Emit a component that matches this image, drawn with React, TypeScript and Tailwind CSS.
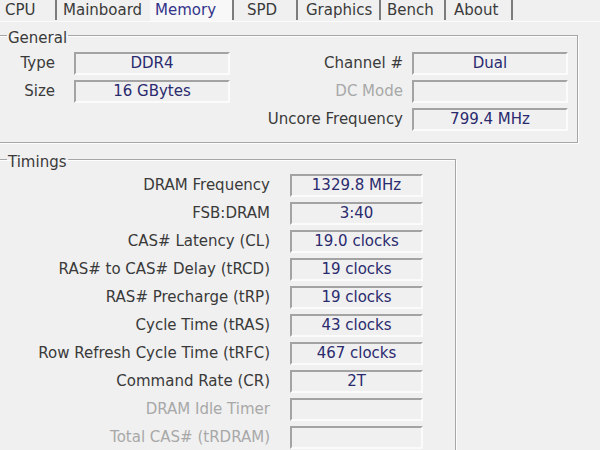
import React from "react";

const font = { fontFamily: '"DejaVu Sans", Verdana, sans-serif' };

function Field({ value, w }: { value?: string; w: string }) {
  return (
    <div
      className={`${w} h-[23px] border-2 border-t-[#a3a3a3] border-l-[#a3a3a3] border-b-[#fbfbfb] border-r-[#fbfbfb] bg-[#f0f0f0] flex items-center justify-center text-[15px] leading-[18px] text-[#2a2a6e]`}
    >
      {value}
    </div>
  );
}

function Sep() {
  return <div className="w-[2px] h-[20px] bg-[#7c7c7c] self-start" />;
}

const timings: { label: string; value?: string; disabled?: boolean }[] = [
  { label: "DRAM Frequency", value: "1329.8 MHz" },
  { label: "FSB:DRAM", value: "3:40" },
  { label: "CAS# Latency (CL)", value: "19.0 clocks" },
  { label: "RAS# to CAS# Delay (tRCD)", value: "19 clocks" },
  { label: "RAS# Precharge (tRP)", value: "19 clocks" },
  { label: "Cycle Time (tRAS)", value: "43 clocks" },
  { label: "Row Refresh Cycle Time (tRFC)", value: "467 clocks" },
  { label: "Command Rate (CR)", value: "2T" },
  { label: "DRAM Idle Timer", disabled: true },
  { label: "Total CAS# (tRDRAM)", disabled: true },
];

export default function App() {
  return (
    <div
      className="w-[600px] h-[450px] bg-[#f0f0f0] overflow-hidden text-[15px] text-[#3a3a3a]"
      style={font}
    >
      {/* Tabs */}
      <div className="flex h-[22px] border-b border-b-[#fbfbfb] leading-[20px]">
        <div className="w-[55px] pl-[5px]">CPU</div>
        <Sep />
        <div className="w-[93px] pl-[6px]">Mainboard</div>
        <div className="w-[82px] pl-[5px] bg-[#f8f8f8] text-[#33338a]">Memory</div>
        <Sep />
        <div className="w-[62px] pl-[13px]">SPD</div>
        <Sep />
        <div className="w-[81px] pl-[8px]">Graphics</div>
        <Sep />
        <div className="w-[63px] pl-[6px]">Bench</div>
        <Sep />
        <div className="w-[65px] pl-[8px]">About</div>
        <Sep />
      </div>

      {/* General */}
      <fieldset className="mt-[4px] -ml-[3px] w-[581px] border border-[#a6a6a6] shadow-[1px_1px_0_#fdfdfd,inset_1px_1px_0_#fdfdfd] pt-[5px] pb-[9px]">
        <legend className="ml-[9px] px-[1px] leading-[18px]">
          <span className="relative top-[3px]">General</span>
        </legend>
        <div className="flex flex-col">
          <div className="flex items-center h-[28px]">
            <div className="w-[57px] text-right">Type</div>
            <div className="ml-[19px]"><Field w="w-[156px]" value="DDR4" /></div>
            <div className="w-[150px] ml-[23px] text-right">Channel #</div>
            <div className="ml-[9px]"><Field w="w-[156px]" value="Dual" /></div>
          </div>
          <div className="flex items-center h-[28px]">
            <div className="w-[57px] text-right">Size</div>
            <div className="ml-[19px]"><Field w="w-[156px]" value="16 GBytes" /></div>
            <div className="w-[150px] ml-[23px] text-right text-[#a8a8a8]">DC Mode</div>
            <div className="ml-[9px]"><Field w="w-[156px]" /></div>
          </div>
          <div className="flex items-center h-[28px]">
            <div className="w-[57px]" />
            <div className="ml-[19px] w-[156px]" />
            <div className="w-[150px] ml-[23px] text-right">Uncore Frequency</div>
            <div className="ml-[9px]"><Field w="w-[156px]" value="799.4 MHz" /></div>
          </div>
        </div>
      </fieldset>

      {/* Timings */}
      <fieldset className="mt-[7px] -ml-[3px] w-[459px] border border-[#a6a6a6] shadow-[1px_1px_0_#fdfdfd,inset_1px_1px_0_#fdfdfd] pt-[3px] pb-[10px]">
        <legend className="ml-[9px] px-[1px] leading-[18px]">
          <span className="relative top-[3px]">Timings</span>
        </legend>
        <div className="flex flex-col">
          {timings.map((t) => (
            <div key={t.label} className="flex items-center h-[28px]">
              <div className={`w-[272px] text-right ${t.disabled ? "text-[#a8a8a8]" : ""}`}>
                {t.label}
              </div>
              <div className="ml-[20px]"><Field w="w-[133px]" value={t.value} /></div>
            </div>
          ))}
        </div>
      </fieldset>
    </div>
  );
}
